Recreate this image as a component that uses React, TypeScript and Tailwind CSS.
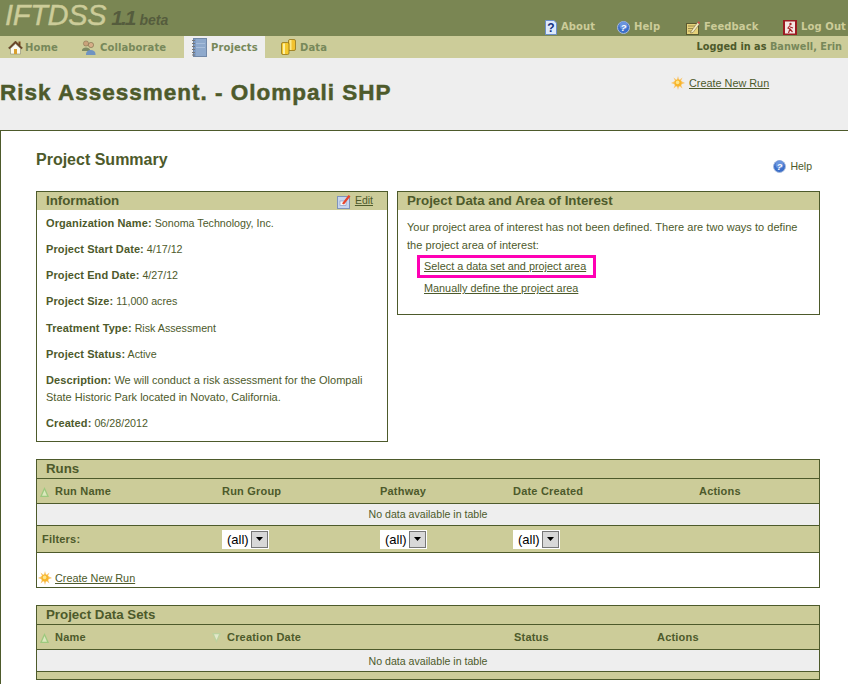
import React from "react";

function HomeIcon() {
  return (
    <svg width="15" height="15" viewBox="0 0 15 15" className="shrink-0">
      <rect x="10.5" y="1.5" width="2" height="4" fill="#7a4a20" />
      <path d="M0.5 8 L7.5 1 L14.5 8 L13 9 L7.5 3.6 L2 9 Z" fill="#6b4426" stroke="#4a2f18" strokeWidth="0.5" />
      <path d="M2.5 8.5 L7.5 3.8 L12.5 8.5 V14 H2.5 Z" fill="#fbfaf0" stroke="#8a8a70" strokeWidth="0.6" />
      <rect x="6" y="9" width="3" height="5" fill="#d9a030" />
    </svg>
  );
}
function CollabIcon() {
  return (
    <svg width="15" height="15" viewBox="0 0 15 15" className="shrink-0">
      <circle cx="5" cy="3.5" r="2.6" fill="#c9a27a" stroke="#7a6a4a" strokeWidth="0.5" />
      <path d="M1 10 C1 6.5 9 6.5 9 10 V11 H1 Z" fill="#7d8a62" />
      <circle cx="10" cy="5" r="2.6" fill="#d6ae88" stroke="#6a5a3a" strokeWidth="0.5" />
      <path d="M5 14 C5 8.5 14.5 8.5 14.5 14 V15 H5 Z" fill="#6f93c0" />
    </svg>
  );
}
function BookIcon() {
  return (
    <svg width="15" height="19" viewBox="0 0 15 19" className="shrink-0">
      <rect x="1.5" y="0.5" width="13" height="18" fill="#7f9cc4" stroke="#7188a8" />
      <rect x="4" y="1" width="10" height="17" fill="#8ea9cc" />
      <rect x="4" y="5" width="9" height="1" fill="#a8bedb" />
      <rect x="4" y="9" width="9" height="1" fill="#a8bedb" />
      <path d="M0 2.5H3M0 5.5H3M0 8.5H3M0 11.5H3M0 14.5H3M0 17H3" stroke="#777" strokeWidth="1" />
    </svg>
  );
}
function DataIcon() {
  return (
    <svg width="15" height="16" viewBox="0 0 15 16" className="shrink-0">
      <rect x="7.5" y="0.5" width="7" height="11" rx="1.5" fill="#f2c230" stroke="#8a6a10" strokeWidth="0.7" />
      <rect x="8.5" y="1" width="2" height="10" fill="#fbe88a" />
      <rect x="0.5" y="3.5" width="7.5" height="12" rx="1.5" fill="#f5c92e" stroke="#8a6a10" strokeWidth="0.7" />
      <rect x="2" y="4.5" width="2" height="10.5" fill="#fdf0a0" />
    </svg>
  );
}
function AboutIcon() {
  return (
    <svg width="12" height="15" viewBox="0 0 12 15" className="shrink-0">
      <path d="M0.5 0.5 H9 L11.5 3 V14.5 H0.5 Z" fill="#dce9fb" stroke="#6d8fc8" />
      <text x="6" y="12" textAnchor="middle" fontFamily="'Liberation Sans', sans-serif" fontWeight="700" fontSize="12" fill="#14307e">?</text>
    </svg>
  );
}
function HelpIcon({ size = 13 }: { size?: number }) {
  return (
    <svg width={size} height={size} viewBox="0 0 13 13" className="shrink-0">
      <circle cx="6.5" cy="6.5" r="6" fill="#3c6fc9" stroke="#a9bbdc" strokeWidth="1" />
      <circle cx="6.5" cy="4.5" r="4" fill="#6a94de" />
      <text x="6.5" y="10" textAnchor="middle" fontFamily="'Liberation Sans', sans-serif" fontWeight="700" fontStyle="italic" fontSize="9.5" fill="#ffffff">?</text>
    </svg>
  );
}
function FeedbackIcon() {
  return (
    <svg width="14" height="14" viewBox="0 0 14 14" className="shrink-0">
      <rect x="0.5" y="2.5" width="12" height="11" fill="#e6d27a" stroke="#5c5a30" />
      <path d="M2 5H9M2 7.5H7M2 10H6" stroke="#8a7a40" strokeWidth="0.8" />
      <path d="M5 10.5 L11.5 1.5 L13.5 3 L7 11.5 L4.5 12 Z" fill="#f3ecc0" stroke="#6a5a3a" strokeWidth="0.5" />
      <path d="M11.5 1.5 L12.5 0.3 L14 1.6 L13.5 3 Z" fill="#d84a4a" />
    </svg>
  );
}
function LogoutIcon() {
  return (
    <svg width="14" height="15" viewBox="0 0 14 15" className="shrink-0">
      <rect x="0" y="0" width="14" height="15" fill="#9c1b22" />
      <rect x="2" y="1.5" width="10" height="12" fill="#f4e6e4" />
      <circle cx="7.5" cy="4" r="1.2" fill="#a8242a" />
      <path d="M7 5.5 L5 8 L7 9 L5.5 13 M7 7 L10 8 M7 9 L9.5 12" stroke="#a8242a" strokeWidth="1.2" fill="none" />
    </svg>
  );
}
function SunIcon() {
  return (
    <svg width="14" height="14" viewBox="0 0 14 14" className="shrink-0">
      <path d="M7 0 L8.2 4 L11.5 1.5 L10 5 L14 7 L10 8.5 L11.5 12.5 L8.2 10 L7 14 L5.8 10 L2.5 12.5 L4 8.5 L0 7 L4 5 L2.5 1.5 L5.8 4 Z" fill="#f9c56a" />
      <circle cx="7" cy="7" r="3.6" fill="#f8b52a" />
      <circle cx="6.6" cy="6.4" r="1.8" fill="#fde58a" />
    </svg>
  );
}
function EditIcon() {
  return (
    <svg width="14" height="15" viewBox="0 0 14 15" className="shrink-0">
      <rect x="0.5" y="2.5" width="12" height="12" fill="#c8d6ef" stroke="#7e93bb" />
      <rect x="3" y="7" width="6" height="4.5" fill="#f4f7fc" stroke="#7e93bb" strokeWidth="0.6" />
      <path d="M5 9.5 L11.5 1 L13.5 2.2 L7 10.5 Z" fill="#e8452c" />
    </svg>
  );
}
function SortIcon({ up = true }: { up?: boolean }) {
  return (
    <svg width="9" height="10" viewBox="0 0 9 10" className="shrink-0">
      <path d={up ? "M4.5 0 L9 10 H0 Z" : "M0 0 H9 L4.5 10 Z"} fill={up ? "#9dc97e" : "#bcd29e"} />
      <path d={up ? "M4.5 3 L7 8.7 H2 Z" : "M2 1.3 H7 L4.5 7 Z"} fill={up ? "#dbe8bd" : "#e2e8ca"} />
    </svg>
  );
}

function TopLink({ icon, label, className }: { icon: React.ReactNode; label: string; className: string }) {
  return (
    <div className={`flex items-center ${className}`}>
      {icon}
      <span className="pb-[2px] text-[10px] font-bold tracking-[0.1px] text-[#cccc99] font-['DejaVu_Sans',sans-serif]">{label}</span>
    </div>
  );
}

function NavItem({ icon, label, className }: { icon: React.ReactNode; label: string; className: string }) {
  return (
    <div className={`flex h-full items-center ${className}`}>
      {icon}
      <span className="pt-[1px] text-[10px] font-bold tracking-[0.1px] text-[#77885a] font-['DejaVu_Sans',sans-serif]">{label}</span>
    </div>
  );
}

function Field({ label, value, className = "" }: { label: string; value: string; className?: string }) {
  return (
    <p className={`h-[26px] text-[10.7px] leading-[26px] ${className}`}>
      <b className="text-[11px] font-bold tracking-[0.1px]">{label}:</b> {value}
    </p>
  );
}

function Filter() {
  return (
    <div className="flex h-[19px] w-[47px] items-center bg-white pl-[5px]">
      <span className="w-[24px] text-[13px] leading-[19px] text-black">(all)</span>
      <span className="flex h-[17px] w-[17px] items-center justify-center border border-[#777] bg-[#d8d8d8]">
        <svg width="7" height="4" viewBox="0 0 7 4"><path d="M0 0H7L3.5 4Z" fill="#000" /></svg>
      </span>
    </div>
  );
}

export default function App() {
  return (
    <div className="h-[684px] w-[848px] overflow-hidden bg-white text-[11px] text-[#4d5a2b] font-['Liberation_Sans',Arial,sans-serif]">
      <header className="flex h-[36px] items-start justify-between bg-[#7a8653]">
        <div className="flex items-baseline pl-[5px] italic">
          <span className="text-[29px] leading-[30px] tracking-[-0.3px] text-[#cccc99] [-webkit-text-stroke:0.4px_#cccc99]">IFTDSS</span>
          <span className="ml-[5px] text-[21px] font-bold leading-[30px] tracking-[-2px] text-[#555c3d]">1.1</span>
          <span className="ml-[5px] text-[14px] font-bold leading-[30px] text-[#555c3d]">beta</span>
        </div>
        <div className="flex h-[36px] pr-[2px] pt-[19px]">
          <TopLink icon={<AboutIcon />} label="About" className="w-[72px] gap-[4px]" />
          <TopLink icon={<HelpIcon />} label="Help" className="w-[69px] gap-[4px]" />
          <TopLink icon={<FeedbackIcon />} label="Feedback" className="w-[97px] gap-[4px]" />
          <TopLink icon={<LogoutIcon />} label="Log Out" className="gap-[4px]" />
        </div>
      </header>

      <nav className="flex h-[22px] items-center bg-[#cccc99] pl-[8px]">
        <NavItem icon={<HomeIcon />} label="Home" className="w-[73px] gap-[2px]" />
        <NavItem icon={<CollabIcon />} label="Collaborate" className="w-[103px] gap-[4px]" />
        <NavItem icon={<BookIcon />} label="Projects" className="w-[81px] gap-[4px] bg-[#eeeeee] pl-[8px]" />
        <NavItem icon={<DataIcon />} label="Data" className="ml-[16px] gap-[4px]" />
        <p className="ml-auto pr-[6px] pt-[1px] text-[9.75px] font-bold text-[#4d5a2b] font-['DejaVu_Sans',sans-serif]">
          Logged in as <span className="text-[#77885a]">Banwell, Erin</span>
        </p>
      </nav>

      <section className="flex h-[72px] bg-[#eeeeee]">
        <h1 className="w-[671px] pt-[21px] text-[22.5px] font-bold leading-[28px] tracking-[1px] text-[#4d5a2b] [-webkit-text-stroke:0.5px_#4d5a2b]">
          Risk Assessment. - Olompali SHP
        </h1>
        <div className="flex h-fit items-center gap-[4px] pt-[18px]">
          <SunIcon />
          <a className="text-[10.85px] leading-[14px] underline">Create New Run</a>
        </div>
      </section>

      <main className="h-[554px] border-l border-t border-[#4d5a2b] pl-[35px] pr-[27px]">
        <div className="flex h-[60px] justify-between">
          <h2 className="pt-[20px] text-[16px] font-bold leading-[18px]">Project Summary</h2>
          <div className="flex h-fit items-center gap-[4px] pr-[9px] pt-[28px]">
            <HelpIcon />
            <span className="text-[10.5px] leading-[14px]">Help</span>
          </div>
        </div>

        <div className="flex items-start gap-[9px]">
          <div className="h-[251px] w-[352px] border border-[#4d5a2b]">
            <div className="flex h-[18px] items-center justify-between bg-[#cccc99] pl-[9px] pr-[14px]">
              <h3 className="pb-[1px] text-[13.3px] font-bold leading-[17px]">Information</h3>
              <div className="flex items-center gap-[4px]">
                <EditIcon />
                <a className="text-[10.5px] underline">Edit</a>
              </div>
            </div>
            <div className="px-[9px]">
              <Field label="Organization Name" value="Sonoma Technology, Inc." />
              <Field label="Project Start Date" value="4/17/12" />
              <Field label="Project End Date" value="4/27/12" />
              <Field label="Project Size" value="11,000 acres" />
              <Field label="Treatment Type" value="Risk Assessment" className="mt-[1px]" />
              <Field label="Project Status" value="Active" />
              <p className="pb-[4px] pt-[5px] leading-[17px]">
                <b className="font-bold tracking-[0.1px]">Description:</b> We will conduct a risk assessment for the Olompali State Historic Park located in Novato, California.
              </p>
              <Field label="Created" value="06/28/2012" />
            </div>
          </div>

          <div className="h-[124px] w-[423px] border border-[#4d5a2b]">
            <h3 className="h-[18px] bg-[#cccc99] pl-[9px] text-[13.3px] font-bold leading-[17px]">Project Data and Area of Interest</h3>
            <p className="pl-[9px] pr-[12px] pt-[8px] leading-[18px] tracking-[0.035px]">
              Your project area of interest has not been defined. There are two ways to define the project area of interest:
            </p>
            <div className="ml-[19px] mt-[1px] h-[23px] w-[179px] border-[3px] border-[#ff00b4] pl-[4px] text-[10.85px] leading-[16px]">
              <a className="underline">Select a data set and project area</a>
            </div>
            <a className="ml-[26px] mt-[2px] block text-[10.85px] leading-[16px] underline">Manually define the project area</a>
          </div>
        </div>

        <div className="mt-[17px] h-[129px] w-[784px] border border-[#4d5a2b]">
          <h3 className="h-[19px] border-b border-[#4d5a2b] bg-[#cccc99] pl-[9px] text-[13.3px] font-bold leading-[17px]">Runs</h3>
          <div className="grid h-[25px] grid-cols-[185px_158px_133px_186px_1fr] items-center border-b border-[#4d5a2b] bg-[#cccc99] pt-[1px] text-[11px] font-bold tracking-[0.2px]">
            <div className="flex items-center gap-[6px] pl-[3px]"><SortIcon /><span>Run Name</span></div>
            <span>Run Group</span>
            <span>Pathway</span>
            <span>Date Created</span>
            <span>Actions</span>
          </div>
          <div className="h-[22px] border-b border-[#4d5a2b] bg-[#eeeeee] text-center text-[10.6px] leading-[21px]">No data available in table</div>
          <div className="grid h-[27px] grid-cols-[185px_158px_133px_186px_1fr] items-center border-b border-[#4d5a2b] bg-[#cccc99]">
            <span className="pl-[5px] text-[11px] font-bold tracking-[0.2px]">Filters:</span>
            <Filter />
            <Filter />
            <Filter />
            <span />
          </div>
          <div className="flex items-center gap-[3px] pl-[1px] pt-[18px]">
            <SunIcon />
            <a className="text-[10.85px] leading-[14px] underline">Create New Run</a>
          </div>
        </div>

        <div className="mt-[17px] h-[75px] w-[784px] border border-[#4d5a2b] bg-[#cccc99]">
          <h3 className="h-[19px] border-b border-[#4d5a2b] pl-[9px] text-[13.3px] font-bold leading-[18px]">Project Data Sets</h3>
          <div className="grid h-[25px] grid-cols-[175px_302px_143px_1fr] items-center border-b border-[#4d5a2b] pt-[1px] text-[11px] font-bold tracking-[0.2px]">
            <div className="flex items-center gap-[6px] pl-[3px]"><SortIcon /><span>Name</span></div>
            <div className="flex items-center gap-[6px]"><SortIcon up={false} /><span>Creation Date</span></div>
            <span>Status</span>
            <span>Actions</span>
          </div>
          <div className="h-[22px] border-b border-[#4d5a2b] bg-[#eeeeee] text-center text-[10.6px] leading-[22px]">No data available in table</div>
        </div>
      </main>
    </div>
  );
}
